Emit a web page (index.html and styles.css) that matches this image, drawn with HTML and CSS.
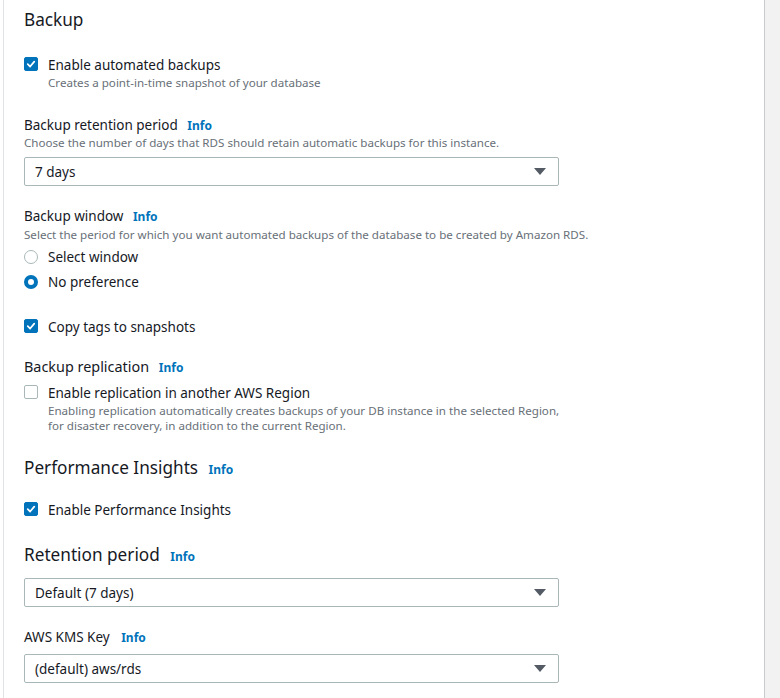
FILE: index.html
```html
<!DOCTYPE html>
<html>
<head>
<meta charset="utf-8">
<link rel="stylesheet" href="styles.css">
</head>
<body>
<div class="page">
  <div class="gutter"></div>
  <div class="card">
    <h2 class="heading h-backup">Backup</h2>

    <div class="check-row r-auto">
      <span class="cb on"><svg viewBox="0 0 14 14"><path d="M3.2 7.2 L6 10 L10.8 4.2" /></svg></span>
      <div class="check-text">
        <div class="label">Enable automated backups</div>
        <div class="desc">Creates a point-in-time snapshot of your database</div>
      </div>
    </div>

    <div class="field-label f-retention">Backup retention period <a class="info">Info</a></div>
    <div class="desc">Choose the number of days that RDS should retain automatic backups for this instance.</div>
    <div class="select s-retention"><span>7 days</span><span class="arrow"></span></div>

    <div class="field-label f-window">Backup window <a class="info">Info</a></div>
    <div class="desc d-window">Select the period for which you want automated backups of the database to be created by Amazon RDS.</div>
    <div class="radio-row r-sel"><span class="radio"></span><span class="label">Select window</span></div>
    <div class="radio-row r-nopref"><span class="radio on"></span><span class="label">No preference</span></div>

    <div class="check-row r-copy">
      <span class="cb on"><svg viewBox="0 0 14 14"><path d="M3.2 7.2 L6 10 L10.8 4.2" /></svg></span>
      <div class="check-text"><div class="label">Copy tags to snapshots</div></div>
    </div>

    <div class="field-label f-repl">Backup replication <a class="info">Info</a></div>
    <div class="check-row r-repl">
      <span class="cb"></span>
      <div class="check-text">
        <div class="label">Enable replication in another AWS Region</div>
        <div class="desc">Enabling replication automatically creates backups of your DB instance in the selected Region,<br>for disaster recovery, in addition to the current Region.</div>
      </div>
    </div>

    <h2 class="heading h-pi">Performance Insights <a class="info">Info</a></h2>
    <div class="check-row r-pi">
      <span class="cb on"><svg viewBox="0 0 14 14"><path d="M3.2 7.2 L6 10 L10.8 4.2" /></svg></span>
      <div class="check-text"><div class="label">Enable Performance Insights</div></div>
    </div>

    <h2 class="heading h-ret">Retention period <a class="info">Info</a></h2>
    <div class="select s-ret"><span>Default (7 days)</span><span class="arrow"></span></div>

    <div class="field-label f-kms">AWS KMS Key <a class="info">Info</a></div>
    <div class="select s-kms"><span>(default) aws/rds</span><span class="arrow"></span></div>
  </div>
  <div class="rest"></div>
</div>
</body>
</html>
```

FILE: styles.css
```css
* { box-sizing: border-box; }
html, body { margin: 0; padding: 0; }
body {
  font-family: "Noto Sans", "Open Sans", Arial, sans-serif;
  color: #16191f;
  background: #ffffff;
  -webkit-font-smoothing: antialiased;
}
.page {
  display: flex;
  height: 698px;
  overflow: hidden;
}
.gutter { width: 3px; flex: none; background: #fff; }
.card {
  width: 762px;
  flex: none;
  border-left: 1px solid #e1e4e6;
  border-right: 1px solid #c9cccf;
  background: #fff;
  padding-left: 20px;
  display: flex;
  flex-direction: column;
  align-items: flex-start;
}
.rest { flex: 1; background: #f2f2f2; }

.heading {
  margin: 0;
  font-size: 17.2px;
  line-height: 22px;
  font-weight: 400;
  color: #16191f;
}
.label { font-size: 13.5px; line-height: 20px; }
.field-label { font-size: 13.5px; line-height: 20px; }
.f-repl { font-size: 14.4px; }
.desc { font-size: 11.6px; line-height: 15px; color: #687078; }
.info {
  font-size: 12px;
  line-height: 1;
  font-weight: 700;
  color: #0073bb;
  margin-left: 6px;
  text-decoration: none;
}
.f-kms .info { margin-left: 8px; }
.heading .info { margin-left: 6px; }

.check-row { display: flex; align-items: flex-start; }
.check-text { margin-left: 10px; }
.cb {
  width: 14px; height: 14px; flex: none;
  margin-top: 2px;
  border: 1px solid #aab7b8;
  border-radius: 2px;
  background: #fff;
  display: flex;
}
.cb.on { background: #0073bb; border-color: #0073bb; }
.cb svg { width: 12px; height: 12px; }
.cb path { fill: none; stroke: #fff; stroke-width: 2; stroke-linecap: round; stroke-linejoin: round; }

.radio-row { display: flex; align-items: center; }
.radio-row .label { margin-left: 10px; }
.radio {
  width: 14px; height: 14px; flex: none;
  border: 1px solid #aab7b8;
  border-radius: 50%;
  background: #fff;
}
.radio.on { border: 4px solid #0073bb; }

.select {
  width: 535px;
  height: 29px;
  border: 1px solid #aab7b8;
  border-radius: 2px;
  padding: 0 12px 0 10px;
  display: flex;
  align-items: center;
  justify-content: space-between;
  font-size: 13.5px;
}
.arrow {
  width: 0; height: 0;
  border-left: 6px solid transparent;
  border-right: 6px solid transparent;
  border-top: 7px solid #545b64;
}

.h-backup { margin-top: 9px; }
.r-auto { margin-top: 24px; }
.f-retention { margin-top: 25px; }
.s-retention { margin-top: 7px; }
.f-window { margin-top: 20px; }
.d-window { margin-top: 1px; }
.r-sel { margin-top: 5px; }
.r-nopref { margin-top: 5px; }
.r-copy { margin-top: 25px; }
.f-repl { margin-top: 20px; }
.r-repl { margin-top: 6px; }
.h-pi { margin-top: 24px; }
.r-pi { margin-top: 21px; }
.h-ret { margin-top: 24px; }
.s-ret { margin-top: 12px; }
.f-kms { margin-top: 20px; }
.s-kms { margin-top: 7px; }
```
